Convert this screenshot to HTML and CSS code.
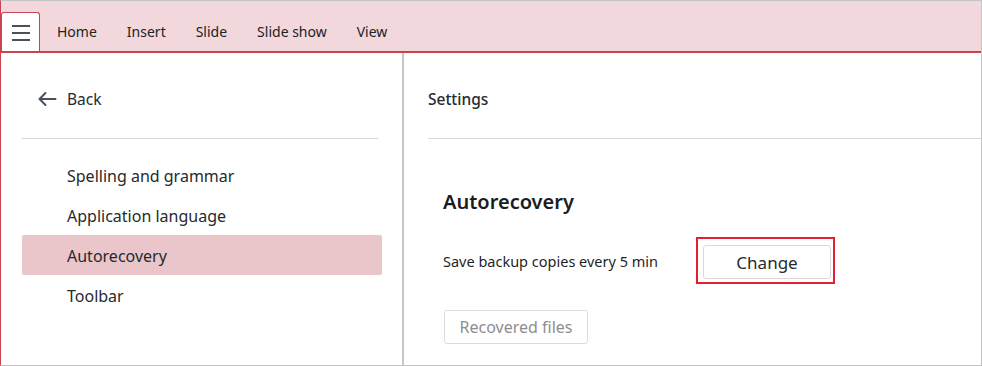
FILE: index.html
```html
<!DOCTYPE html>
<html lang="en">
<head>
<meta charset="utf-8">
<title>Settings</title>
<link rel="stylesheet" href="styles.css">
</head>
<body>
<div class="frame">
  <header class="topbar">
    <button class="menu-btn" aria-label="Menu">
      <span class="bar"></span><span class="bar"></span><span class="bar"></span>
    </button>
    <nav class="tabs">
      <span class="tab">Home</span>
      <span class="tab">Insert</span>
      <span class="tab">Slide</span>
      <span class="tab">Slide show</span>
      <span class="tab">View</span>
    </nav>
  </header>
  <main class="main">
    <aside class="sidebar">
      <div class="back">
        <svg class="back-icon" width="20" height="16" viewBox="0 0 20 16" aria-hidden="true">
          <path d="M18.5 8H2.5M8.5 2L2.5 8L8.5 14" fill="none" stroke="#48515a" stroke-width="2" stroke-linecap="round" stroke-linejoin="round"/>
        </svg>
        <span>Back</span>
      </div>
      <hr class="side-rule">
      <ul class="menu">
        <li class="item">Spelling and grammar</li>
        <li class="item">Application language</li>
        <li class="item active">Autorecovery</li>
        <li class="item">Toolbar</li>
      </ul>
    </aside>
    <section class="content">
      <div class="title">Settings</div>
      <hr class="content-rule">
      <div class="section">
        <h2 class="heading">Autorecovery</h2>
        <div class="row">
          <span class="label">Save backup copies every 5 min</span>
          <span class="highlight"><button class="btn">Change</button></span>
        </div>
        <button class="btn btn-disabled" disabled>Recovered files</button>
      </div>
    </section>
  </main>
</div>
</body>
</html>
```
FILE: styles.css
```css
* { box-sizing: border-box; }
html, body { margin: 0; padding: 0; background: #fff; }
body {
  font-family: "Noto Sans", "Open Sans", sans-serif;
  color: #262a2e;
}
.frame {
  width: 982px;
  height: 366px;
  border: 1px solid #c4c4c4;
  border-left-color: #c94451;
  display: flex;
  flex-direction: column;
  overflow: hidden;
}
.topbar {
  height: 52px;
  flex: none;
  background: #f2d8dc;
  border-bottom: 2px solid #c94451;
  display: flex;
  align-items: flex-end;
}
.menu-btn {
  width: 39px;
  height: 39px;
  padding: 0;
  margin: 0;
  background: #fff;
  border: 1.5px solid #c94451;
  border-bottom: none;
  border-radius: 3px 3px 0 0;
  display: flex;
  flex-direction: column;
  align-items: center;
  justify-content: center;
  gap: 5px;
  padding-top: 1px;
}
.bar {
  display: block;
  width: 18px;
  height: 2px;
  background: #4a5259;
}
.tabs {
  display: flex;
  height: 39px;
  align-items: center;
  padding-left: 2px;
}
.tab {
  font-size: 14px;
  padding: 0 15px;
  color: #222;
}
.main {
  flex: 1;
  display: flex;
}
.sidebar {
  width: 403px;
  flex: none;
  border-right: 2px solid #c3c7cb;
  padding: 26px 20px 0 21px;
}
.back {
  height: 40px;
  display: flex;
  align-items: center;
  gap: 10px;
  padding-left: 15px;
  font-size: 15.5px;
}
.back-icon { display: block; }
.side-rule {
  border: none;
  border-top: 1px solid #d6d9dc;
  margin: 19px 4px 16px 0;
}
.menu {
  list-style: none;
  margin: 0;
  padding: 0;
}
.item {
  height: 40px;
  display: flex;
  align-items: center;
  padding-left: 45px;
  padding-top: 1px;
  font-size: 16px;
  border-radius: 2px;
}
.item.active { background: #eac5c9; }
.content {
  flex: 1;
  padding: 26px 0 0 24px;
}
.title {
  height: 40px;
  display: flex;
  align-items: center;
  font-size: 15.5px;
  font-weight: 500;
}
.content-rule {
  border: none;
  border-top: 1px solid #d6d9dc;
  margin: 19px 0 0 0;
}
.section {
  padding: 50px 0 0 15px;
}
.heading {
  margin: 0;
  font-size: 20px;
  font-weight: 600;
  line-height: 26px;
  color: #1c1c1c;
}
.row {
  display: flex;
  align-items: center;
  margin-top: 22px;
  gap: 38px;
}
.label { font-size: 14.5px; color: #1f1f1f; padding-top: 1px; }
.highlight {
  display: inline-flex;
  border: 2px solid #e3202f;
  padding: 6px 2px 3px 5px;
}
.btn {
  font-family: inherit;
  font-size: 17px;
  color: #262a2e;
  background: #fff;
  border: 1px solid #d8d8d8;
  border-radius: 3px;
  height: 34px;
  padding: 0;
  width: 128px;
}
.btn-disabled {
  margin-top: 26px;
  margin-left: 1px;
  width: 144px;
  font-size: 16px;
  color: #8e8e8e;
  border-color: #dcdcdc;
}
```
